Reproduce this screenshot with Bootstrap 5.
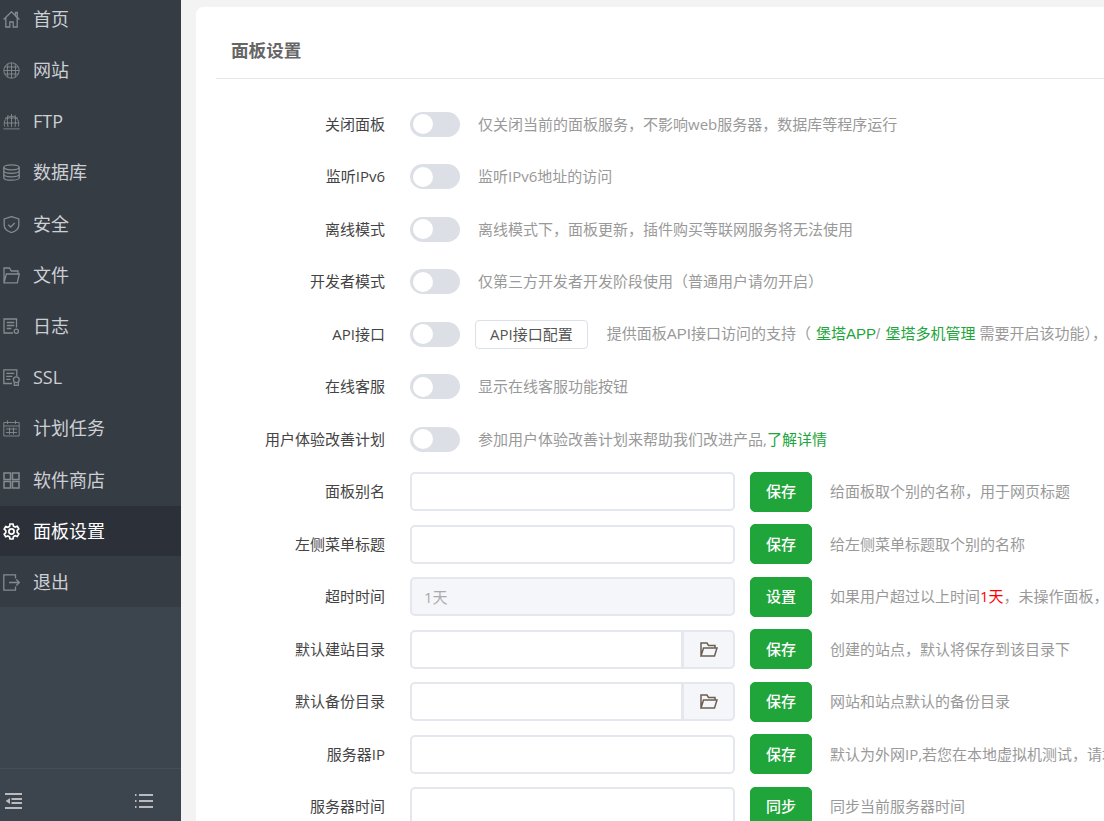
<!DOCTYPE html>
<html lang="zh-CN"><head><meta charset="utf-8"><title>面板设置</title>
<link href="https://cdn.jsdelivr.net/npm/bootstrap@5.3.0/dist/css/bootstrap.min.css" rel="stylesheet">
<style>
html,body{height:100%;overflow:hidden}
body{background:#f3f3f3;font-family:"Open Sans","Noto Sans CJK SC",sans-serif;font-size:15px;color:#555}
.shell{height:821px;width:1104px;overflow:hidden}
.side{width:181px;flex:none;background:#3c444d;overflow:hidden}
.side-list{background:#363c44;margin-top:-5.6px}
.side-item{height:50px;margin-bottom:1.2px;color:#ccd0d4;font-size:18px;padding-left:3px;gap:13px}
.side-item:last-child{margin-bottom:0}
.side-item.is-on{background:#2c3038;color:#fff}
.side-item svg{width:17px;height:17px;flex:none;stroke:#858a8f;fill:none;stroke-width:1.3}
.side-item svg.ico-thin{stroke-width:.9}
.side-item svg.ico-bold{stroke-width:1.5}
.side-item.is-on svg{stroke:#fff;stroke-width:1.7}
.side-foot{height:53px;border-top:1px solid #454e57;padding:23px 28px 0 5px}
.side-foot svg{width:18px;height:18px;stroke:#b8babd;stroke-width:1.8;fill:none}
.main{padding:7px 0 0 15px;flex:none;width:923px}
.panel{background:#fff;border-radius:7px 0 0 0;width:1000px;height:900px;padding:0 0 0 20px}
.panel-head{height:72px;border-bottom:1px solid #e6e6e6;padding:16px 0 0 15px;font-size:17.6px;font-weight:700;color:#666}
.rows{padding-top:18.8px}
.set-row{height:52.5px;white-space:nowrap}
.set-label{width:169px;flex:none;text-align:right;margin-right:25px;color:#444}
.tog{width:50px;height:25px;border-radius:13px;background:#dcdfe6;flex:none;padding:2.5px 0 0 2.5px}
.tog-knob{width:20px;height:20px;border-radius:50%;background:#fff;display:block}
.hint{color:#999;margin-left:18px}
.hint b{font-weight:400}
.hint-green{color:#20a53a}
.hint-red{color:#f00}
.cfg-btn{height:29px;padding:0 14px;margin-left:15px;border:1px solid #dcdfe6;border-radius:4px;background:#fff;color:#555;font-size:15px;line-height:27px}
.hint-api{margin-left:19px;font-family:"Liberation Sans","Noto Sans CJK SC",sans-serif}
.hint-api b{margin-left:1px}
.fld{width:325px;flex:none}
.fld .form-control{height:39px;border:2px solid #e4e7ed;border-radius:5px;box-shadow:none;background:#fff;color:#aaa;font-size:15px;padding:0 12px}
.fld .form-control:disabled{background:#f5f6fa}
.fld .input-group-text{width:53px;height:39px;justify-content:center;background:#f5f6fa;border:2px solid #e4e7ed;border-radius:0 5px 5px 0;margin-left:-2px;padding:0}
.fld .input-group-text svg{width:19px;height:19px;stroke:#6b5f52;stroke-width:1.5;fill:none}
.go{width:62px;height:40px;margin-left:15px;padding:0;flex:none;background:#20a53a;border-color:#20a53a;border-radius:5px;font-size:15px;font-weight:500}
.hint-f{margin-left:18px}
</style></head><body>
<div class="shell d-flex">
<aside class="side d-flex flex-column">
<div class="side-list">
<div class="side-item d-flex align-items-center"><svg viewBox="0 0 17 17"><path d="M.6 8.500 8.500.8l7.900 7.700M2.800 6.800V16h4v-5h3.400v5h4V6.800M12.500 1.500v3.500l1.800 1.700V1.500z"/></svg>首页</div>
<div class="side-item d-flex align-items-center"><svg class="ico-thin" viewBox="0 0 17 17"><circle cx="8.500" cy="8.500" r="7.700"/><path d="M1.500 5h14M.8 8.500h15.400M1.500 12h14M5 1.500c-.8 4.500-.8 9.500 0 14M8.500.8v15.400M12 1.500c.8 4.500.8 9.500 0 14"/></svg>网站</div>
<div class="side-item d-flex align-items-center"><svg class="ico-thin" viewBox="0 0 17 17"><path d="M1.800 13.500A7.300 7.300 0 1 1 15.200 13.500M.4 15.900h16.200M2 5h13M1.200 10h14.600M8.500 1v13M5 2c-.8 3.500-.8 7.500 0 12M12 2c.8 3.500.8 7.500 0 12"/></svg>FTP</div>
<div class="side-item d-flex align-items-center"><svg viewBox="0 0 17 17"><ellipse cx="8.500" cy="3.300" rx="7.700" ry="2.500"/><path d="M.8 3.300v10.400c0 1.400 3.400 2.500 7.700 2.500s7.700-1.100 7.700-2.500V3.300M.8 6.800c0 1.400 3.400 2.500 7.700 2.500s7.700-1.100 7.700-2.500M.8 10.300c0 1.400 3.400 2.500 7.700 2.500s7.700-1.100 7.700-2.500"/></svg>数据库</div>
<div class="side-item d-flex align-items-center"><svg viewBox="0 0 17 17"><path d="M8.500.6 15.800 3v6.300c0 3.300-3 5.900-7.300 7.300-4.300-1.400-7.300-4-7.300-7.300V3z"/><path d="m5.300 8.700 2.400 2.300 4-4"/></svg>安全</div>
<div class="side-item d-flex align-items-center"><svg viewBox="0 0 17 17"><path d="M1 15.800V1h5.500l1.800 3H15v3M1 15.800 3.300 7H16.300l-2 8.800z"/></svg>文件</div>
<div class="side-item d-flex align-items-center"><svg viewBox="0 0 17 17"><path d="M10 15H1V1h12.500v8.500M3.800 4.500h7.500M3.800 7.500h7.500M3.800 10.500h4.500"/><circle cx="13.300" cy="13.300" r="2.100"/></svg>日志</div>
<div class="side-item d-flex align-items-center"><svg viewBox="0 0 17 17"><path d="M9 14.500H.8V.8h13v6.500M3.300 4.300h8M3.300 7.300h6M3.300 10.300h4"/><circle cx="13.300" cy="10.800" r="2.900"/><path d="M11.300 13.500V17l2-1 2 1v-3.500"/></svg>SSL</div>
<div class="side-item d-flex align-items-center"><svg class="ico-thin" viewBox="0 0 17 17"><path d="M.8 2.500h15.400V16H.8zM4.500.4v3.500M12.500.4v3.500M.8 6h15.400M3 9h11M3 12.500h11M6.500 7.500v7M10.500 7.500v7"/></svg>计划任务</div>
<div class="side-item d-flex align-items-center"><svg class="ico-bold" viewBox="0 0 17 17"><path d="M1 1h6.500v6.500H1zM9.500 1H16v6.500H9.500zM1 9.500h6.500V16H1zM9.500 9.500H16V16H9.500z"/></svg>软件商店</div>
<div class="side-item is-on d-flex align-items-center"><svg viewBox="0 0 17 17"><circle cx="8.500" cy="8.500" r="2.600"/><path d="M7 1h3l.5 2.200 1.700.9 2.100-.8 1.500 2.600-1.600 1.500v2l1.600 1.500-1.500 2.600-2.100-.8-1.700.9L10 16H7l-.5-2.200-1.700-.9-2.100.8-1.500-2.600 1.600-1.500v-2L1.200 6.100l1.500-2.600 2.100.8 1.700-.9z"/></svg>面板设置</div>
<div class="side-item d-flex align-items-center"><svg viewBox="0 0 17 17"><path d="M12.500 4.500V.8H.8v15.400h11.700v-3.700M6 8.500h10.300M13.300 5.500l3 3-3 3"/></svg>退出</div>
</div>
<div class="side-foot mt-auto d-flex align-items-start justify-content-between">
<svg viewBox="0 0 18 18"><path d="M0 2h17M0 16h17M6.500 7h10.500M6.500 11h10.500"/><path d="M5 6v6L.6 9z" fill="#b8babd" stroke="none"/></svg>
<svg viewBox="0 0 18 18"><path d="M0 3h1.500M0 9h1.500M0 15h1.500M4 3h14M4 9h14M4 15h14"/></svg>
</div>
</aside>
<main class="main">
<section class="panel">
<div class="panel-head d-flex align-items-center">面板设置</div>
<div class="rows">
<div class="set-row d-flex align-items-center"><div class="set-label">关闭面板</div><span class="tog"><i class="tog-knob"></i></span><span class="hint">仅关闭当前的面板服务，不影响web服务器，数据库等程序运行</span></div>
<div class="set-row d-flex align-items-center"><div class="set-label">监听IPv6</div><span class="tog"><i class="tog-knob"></i></span><span class="hint">监听IPv6地址的访问</span></div>
<div class="set-row d-flex align-items-center"><div class="set-label">离线模式</div><span class="tog"><i class="tog-knob"></i></span><span class="hint">离线模式下，面板更新，插件购买等联网服务将无法使用</span></div>
<div class="set-row d-flex align-items-center"><div class="set-label">开发者模式</div><span class="tog"><i class="tog-knob"></i></span><span class="hint">仅第三方开发者开发阶段使用（普通用户请勿开启）</span></div>
<div class="set-row d-flex align-items-center"><div class="set-label">API接口</div><span class="tog"><i class="tog-knob"></i></span><button type="button" class="btn cfg-btn">API接口配置</button><span class="hint hint-api">提供面板API接口访问的支持（ <b class="hint-green">堡塔APP</b>/ <b class="hint-green">堡塔多机管理</b> 需要开启该功能），</span></div>
<div class="set-row d-flex align-items-center"><div class="set-label">在线客服</div><span class="tog"><i class="tog-knob"></i></span><span class="hint">显示在线客服功能按钮</span></div>
<div class="set-row d-flex align-items-center"><div class="set-label">用户体验改善计划</div><span class="tog"><i class="tog-knob"></i></span><span class="hint">参加用户体验改善计划来帮助我们改进产品,<b class="hint-green">了解详情</b></span></div>
<div class="set-row d-flex align-items-center"><div class="set-label">面板别名</div><div class="fld"><input class="form-control" type="text"></div><button type="button" class="btn btn-success go">保存</button><span class="hint hint-f">给面板取个别的名称，用于网页标题</span></div>
<div class="set-row d-flex align-items-center"><div class="set-label">左侧菜单标题</div><div class="fld"><input class="form-control" type="text"></div><button type="button" class="btn btn-success go">保存</button><span class="hint hint-f">给左侧菜单标题取个别的名称</span></div>
<div class="set-row d-flex align-items-center"><div class="set-label">超时时间</div><div class="fld"><input class="form-control" type="text" value="1天" disabled></div><button type="button" class="btn btn-success go">设置</button><span class="hint hint-f">如果用户超过以上时间<b class="hint-red">1天</b>，未操作面板，将自动退出面板</span></div>
<div class="set-row d-flex align-items-center"><div class="set-label">默认建站目录</div><div class="fld input-group flex-nowrap"><input class="form-control" type="text"><span class="input-group-text"><svg viewBox="0 0 19 19"><path d="M2 16V3h6l1.500 2.500H16V8M2 16l2.500-8H18l-2.500 8z"/></svg></span></div><button type="button" class="btn btn-success go">保存</button><span class="hint hint-f">创建的站点，默认将保存到该目录下</span></div>
<div class="set-row d-flex align-items-center"><div class="set-label">默认备份目录</div><div class="fld input-group flex-nowrap"><input class="form-control" type="text"><span class="input-group-text"><svg viewBox="0 0 19 19"><path d="M2 16V3h6l1.500 2.500H16V8M2 16l2.500-8H18l-2.500 8z"/></svg></span></div><button type="button" class="btn btn-success go">保存</button><span class="hint hint-f">网站和站点默认的备份目录</span></div>
<div class="set-row d-flex align-items-center"><div class="set-label">服务器IP</div><div class="fld"><input class="form-control" type="text"></div><button type="button" class="btn btn-success go">保存</button><span class="hint hint-f">默认为外网IP,若您在本地虚拟机测试，请填写虚拟机内网IP</span></div>
<div class="set-row d-flex align-items-center"><div class="set-label">服务器时间</div><div class="fld"><input class="form-control" type="text"></div><button type="button" class="btn btn-success go">同步</button><span class="hint hint-f">同步当前服务器时间</span></div>
</div>
</section>
</main>
</div>
</body></html>
